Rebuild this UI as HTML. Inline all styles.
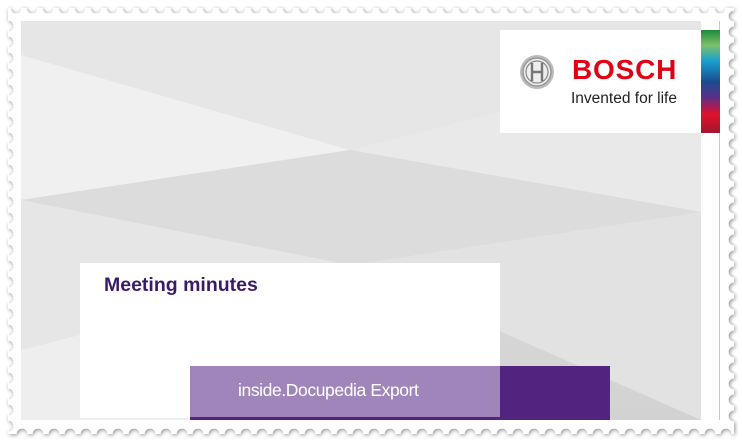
<!DOCTYPE html>
<html><head><style>
body{margin:0;width:742px;height:442px;background:#fff;position:relative;overflow:hidden;font-family:"Liberation Sans",sans-serif}
.abs{position:absolute}
</style></head><body>
<svg class="abs" style="left:0;top:0" width="742" height="442">
<defs>
<filter id="sh" x="-5%" y="-5%" width="110%" height="110%"><feDropShadow dx="1" dy="1" stdDeviation="2" flood-color="#000" flood-opacity="0.45"/></filter>
<linearGradient id="bg" x1="0" y1="0" x2="0" y2="1"><stop offset="0" stop-color="#e4e4e4"/><stop offset="1" stop-color="#d2d2d2"/></linearGradient>
<linearGradient id="cs" x1="0" y1="0" x2="0" y2="1">
<stop offset="0" stop-color="#1d8a3c"/><stop offset="0.15" stop-color="#7cc06a"/><stop offset="0.3" stop-color="#19a0d0"/><stop offset="0.5" stop-color="#1a4d90"/><stop offset="0.65" stop-color="#5a2f8a"/><stop offset="0.82" stop-color="#e0112a"/><stop offset="1" stop-color="#a01830"/></linearGradient>
</defs>
<g filter="url(#sh)">
<path id="stamp" fill="#fff" d=""/>
</g>
<rect x="21" y="21" width="680" height="399" fill="url(#bg)"/>
<polygon points="21,55 350,150 701,60 701,21 21,21" fill="#e6e6e6"/>
<polygon points="21,55 350,150 21,200" fill="#f0f0f0"/>
<polygon points="350,150 701,60 701,212" fill="#e9e9e9"/>
<polygon points="21,200 350,150 701,212 350,265" fill="#dcdcdc"/>
<polygon points="21,200 350,265 21,350" fill="#e6e6e6"/>
<polygon points="350,265 701,212 701,420" fill="#e2e2e2"/>
<polygon points="21,350 350,265 350,420 21,420" fill="#eeeeee"/>
<rect x="701" y="21" width="18" height="399" fill="#fff"/>
<rect x="719" y="21" width="1" height="399" fill="#c8c8c8"/>
<rect x="701" y="30" width="19" height="103" fill="url(#cs)"/>
<rect x="500" y="30" width="201" height="103" fill="#fff"/>
<circle cx="537" cy="72" r="17" fill="#bbb"/>
<circle cx="537" cy="72" r="14" fill="#eee" stroke="#999" stroke-width="1.5"/>
<circle cx="537" cy="72" r="11" fill="none" stroke="#888" stroke-width="1.2"/>
<path d="M532 63v18M542 63v18M532 72h10" stroke="#777" stroke-width="2.4" fill="none"/>
<rect x="80" y="263" width="420" height="155" fill="#fff"/>
<rect x="190" y="366" width="420" height="54" fill="#52237f"/>
<rect x="190" y="366" width="310" height="51" fill="#a085bb"/>
</svg>
<div class="abs" style="left:572px;top:54px;font-size:28px;font-weight:bold;color:#e20015;letter-spacing:0.8px">BOSCH</div>
<div class="abs" style="left:571px;top:90px;font-size:15.5px;color:#222">Invented for life</div>
<div class="abs" style="left:104px;top:274px;font-size:19.5px;font-weight:bold;color:#3c1a6b">Meeting minutes</div>
<div class="abs" style="left:238px;top:380px;font-size:17.5px;color:#fff;letter-spacing:-0.4px">inside.Docupedia Export</div>
<script>
(function(){
var L=8,T=8,R=734,B=434,r=5.5,s=16;
var p="M"+L+" "+T;
for(var x=L;x+s<=R;x+=s){p+=" L"+(x+s/2-r)+" "+T+" A"+r+" "+r+" 0 0 0 "+(x+s/2+r)+" "+T;}
p+=" L"+R+" "+T;
for(var y=T;y+s<=B;y+=s){p+=" L"+R+" "+(y+s/2-r)+" A"+r+" "+r+" 0 0 0 "+R+" "+(y+s/2+r);}
p+=" L"+R+" "+B;
for(var x=R;x-s>=L;x-=s){p+=" L"+(x-s/2+r)+" "+B+" A"+r+" "+r+" 0 0 0 "+(x-s/2-r)+" "+B;}
p+=" L"+L+" "+B;
for(var y=B;y-s>=T;y-=s){p+=" L"+L+" "+(y-s/2+r)+" A"+r+" "+r+" 0 0 0 "+L+" "+(y-s/2-r);}
p+=" Z";
document.getElementById("stamp").setAttribute("d",p);
})();
</script>
</body></html>
